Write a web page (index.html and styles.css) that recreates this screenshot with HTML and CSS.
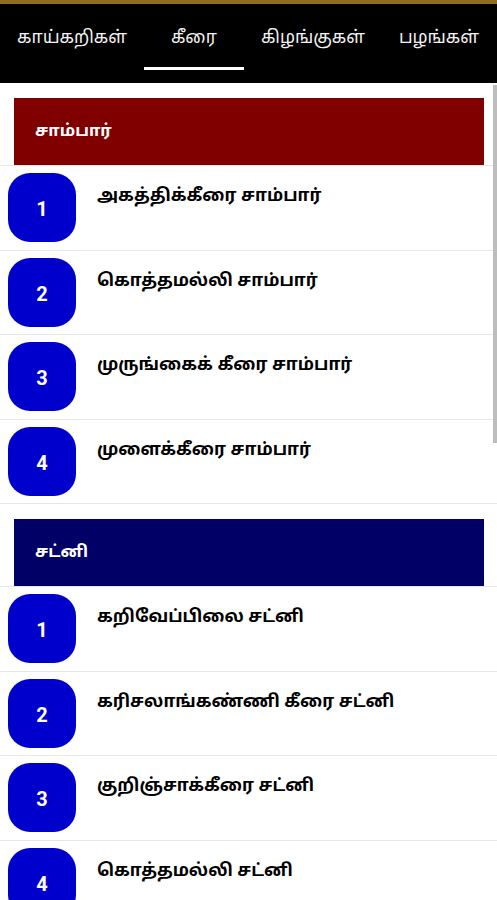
FILE: index.html
```html
<!DOCTYPE html>
<html lang="ta">
<head>
    <meta charset="UTF-8">
    <meta name="viewport" content="width=device-width, initial-scale=1.0">
    <title>சமையல்</title>
    <link rel="stylesheet" href="styles.css">
</head>
<body>
    <div class="topline"></div>
    <div class="tabs">
        <div class="tab">காய்கறிகள்</div>
        <div class="tab active">கீரை</div>
        <div class="tab">கிழங்குகள்</div>
        <div class="tab">பழங்கள்</div>
    </div>
    <div class="content">
        <div class="section">
            <div class="section-head maroon">சாம்பார்</div>
            <div class="row"><div class="badge">1</div><div class="title">அகத்திக்கீரை சாம்பார்</div></div>
            <div class="row"><div class="badge">2</div><div class="title">கொத்தமல்லி சாம்பார்</div></div>
            <div class="row"><div class="badge">3</div><div class="title">முருங்கைக் கீரை சாம்பார்</div></div>
            <div class="row"><div class="badge">4</div><div class="title">முளைக்கீரை சாம்பார்</div></div>
        </div>
        <div class="section">
            <div class="section-head navy">சட்னி</div>
            <div class="row"><div class="badge">1</div><div class="title">கறிவேப்பிலை சட்னி</div></div>
            <div class="row"><div class="badge">2</div><div class="title">கரிசலாங்கண்ணி கீரை சட்னி</div></div>
            <div class="row"><div class="badge">3</div><div class="title">குறிஞ்சாக்கீரை சட்னி</div></div>
            <div class="row"><div class="badge">4</div><div class="title">கொத்தமல்லி சட்னி</div></div>
        </div>
        <div class="scrollbar"></div>
    </div>
</body>
</html>
```

FILE: styles.css
```css
body {
    margin: 0;
    font-family: "Noto Sans Tamil", "Lohit Tamil", "Noto Sans", sans-serif;
    background: #fff;
    overflow: hidden;
}
.topline {
    height: 4px;
    background: #8f6e24;
}
.tabs {
    display: flex;
    height: 79px;
    background: #000;
}
.tab {
    position: relative;
    min-width: 66px;
    padding: 0 17px;
    color: #f2f2f2;
    font-size: 17.5px;
    text-align: center;
    line-height: 70px;
}
.tab.active::after {
    content: "";
    position: absolute;
    left: 0;
    right: 0;
    top: 63px;
    height: 3px;
    background: #fff;
}
.content {
    position: relative;
}
.section {
    padding-top: 15px;
}
.section-head {
    height: 67px;
    margin: 0 13px 0 14px;
    padding-left: 21px;
    color: #fff;
    font-size: 16.5px;
    font-weight: bold;
    display: flex;
    align-items: center;
}
.maroon {
    background: #800000;
}
.navy {
    background: #000066;
}
.row {
    display: flex;
    align-items: flex-start;
    height: 83.5px;
    border-top: 1px solid #e6e6e6;
}
.row:last-child {
    border-bottom: 1px solid #e6e6e6;
}
.badge {
    box-sizing: border-box;
    width: 68px;
    height: 69px;
    margin: 7px 0 0 8px;
    padding-top: 3px;
    border-radius: 22px;
    background: #0000cc;
    color: #fff;
    font-family: Roboto, sans-serif;
    font-weight: bold;
    font-size: 20px;
    display: flex;
    align-items: center;
    justify-content: center;
}
.title {
    margin: 20px 0 0 21px;
    font-size: 17.3px;
    font-weight: bold;
    color: #000;
}
.scrollbar {
    position: absolute;
    right: 0;
    top: 2px;
    width: 4px;
    height: 358px;
    background: #bdbdbd;
}
```
